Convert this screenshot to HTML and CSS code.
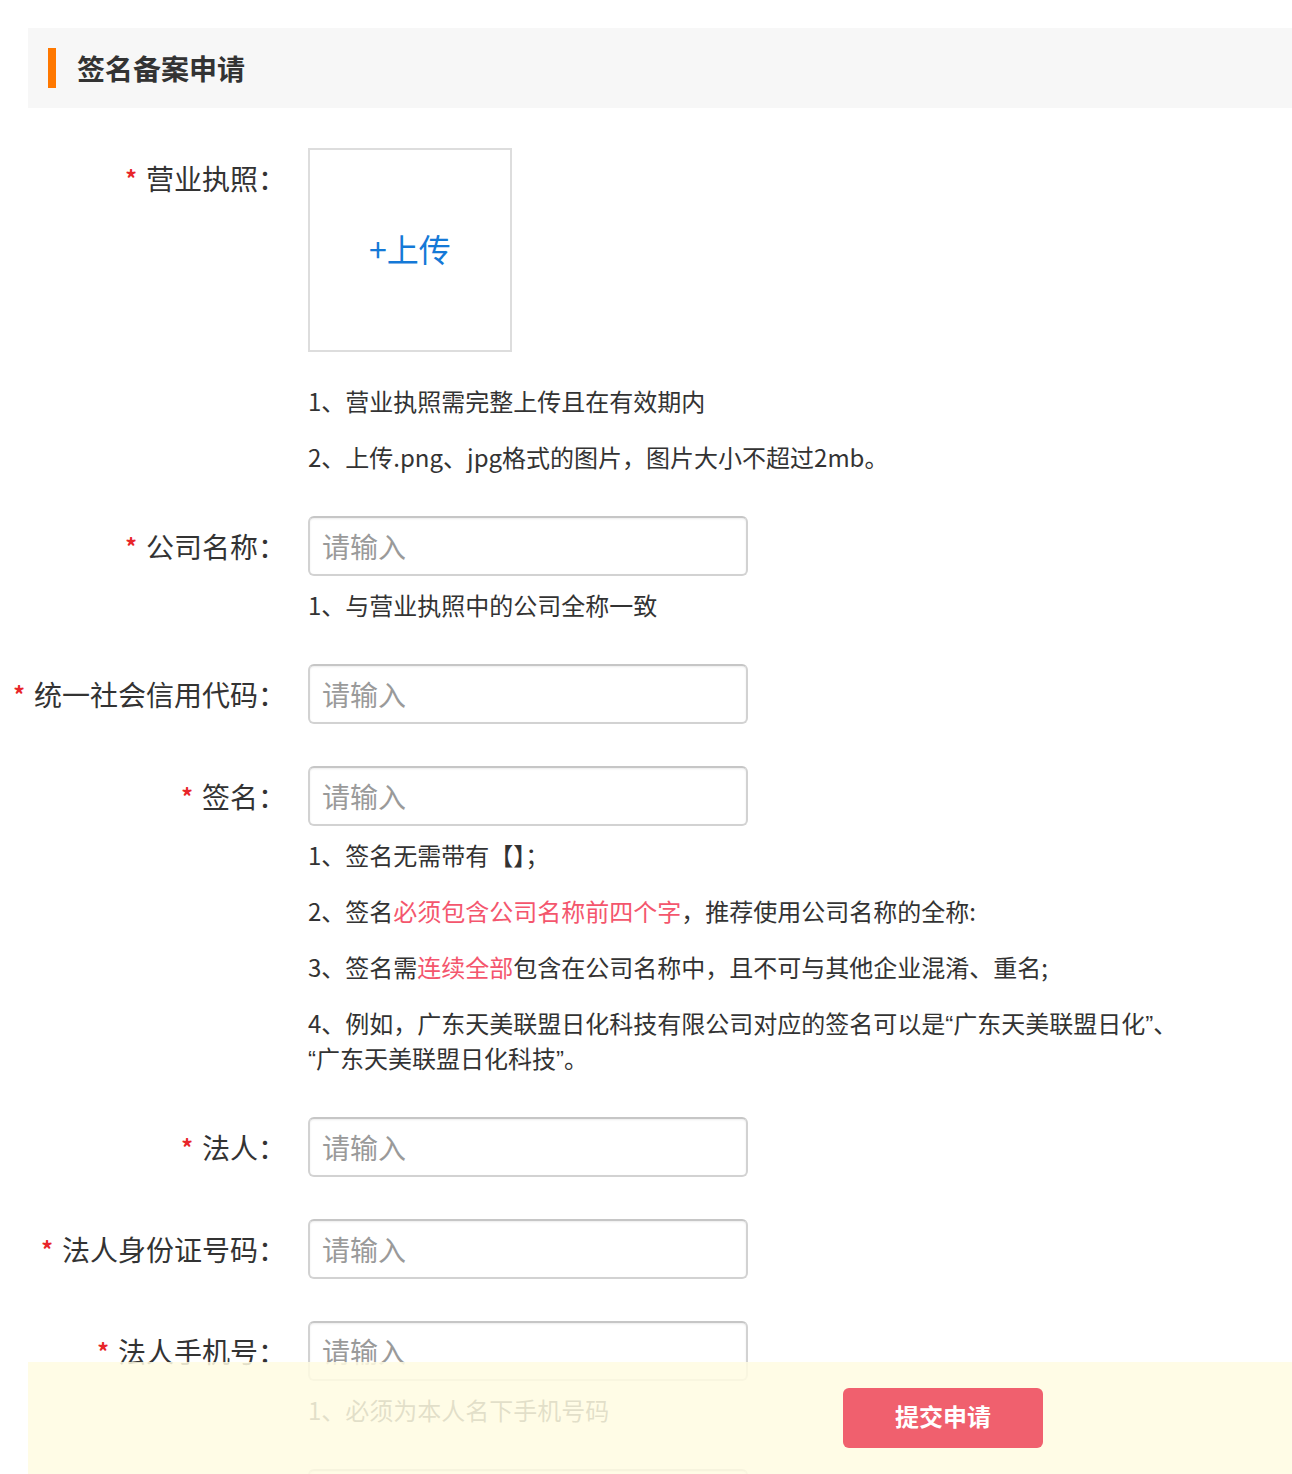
FILE: index.html
```html
<!DOCTYPE html>
<html lang="zh-CN">
<head>
  <meta charset="UTF-8">
  <meta name="viewport" content="width=device-width, initial-scale=1.0">
  <title>签名备案申请</title>
  <link rel="stylesheet" href="styles.css">
</head>
<body>
  <div class="page">
    <div class="panel-title">
      <span class="panel-bar"></span>
      <h2>签名备案申请</h2>
    </div>

    <div class="form">
      <div class="form-row">
        <label class="form-label"><span class="required">*</span><span>营业执照：</span></label>
        <div class="form-field">
          <div class="upload-box">+上传</div>
          <div class="help help-upload">
            <p>1、营业执照需完整上传且在有效期内</p>
            <p>2、上传.png、jpg格式的图片，图片大小不超过2mb。</p>
          </div>
        </div>
      </div>

      <div class="form-row">
        <label class="form-label"><span class="required">*</span><span>公司名称：</span></label>
        <div class="form-field">
          <input type="text" class="text-input" placeholder="请输入">
          <div class="help">
            <p>1、与营业执照中的公司全称一致</p>
          </div>
        </div>
      </div>

      <div class="form-row">
        <label class="form-label"><span class="required">*</span><span>统一社会信用代码：</span></label>
        <div class="form-field">
          <input type="text" class="text-input" placeholder="请输入">
        </div>
      </div>

      <div class="form-row">
        <label class="form-label"><span class="required">*</span><span>签名：</span></label>
        <div class="form-field">
          <input type="text" class="text-input" placeholder="请输入">
          <div class="help help-wide">
            <p>1、签名无需带有【】；</p>
            <p>2、签名<span class="hl">必须包含公司名称前四个字</span>，推荐使用公司名称的全称:</p>
            <p>3、签名需<span class="hl">连续全部</span>包含在公司名称中，且不可与其他企业混淆、重名;</p>
            <p>4、例如，广东天美联盟日化科技有限公司对应的签名可以是<span class="q">“</span>广东天美联盟日化<span class="q">”</span>、<span class="q">“</span>广东天美联盟日化科技<span class="q">”</span>。</p>
          </div>
        </div>
      </div>

      <div class="form-row">
        <label class="form-label"><span class="required">*</span><span>法人：</span></label>
        <div class="form-field">
          <input type="text" class="text-input" placeholder="请输入">
        </div>
      </div>

      <div class="form-row">
        <label class="form-label"><span class="required">*</span><span>法人身份证号码：</span></label>
        <div class="form-field">
          <input type="text" class="text-input" placeholder="请输入">
        </div>
      </div>

      <div class="form-row">
        <label class="form-label"><span class="required">*</span><span>法人手机号：</span></label>
        <div class="form-field">
          <input type="text" class="text-input" placeholder="请输入">
          <div class="help">
            <p>1、必须为本人名下手机号码</p>
          </div>
        </div>
      </div>

      <div class="form-row">
        <label class="form-label"><span class="required">*</span><span>验证码：</span></label>
        <div class="form-field">
          <input type="text" class="text-input" placeholder="请输入">
        </div>
      </div>
    </div>
  </div>

  <div class="submit-bar">
    <button class="submit-btn">提交申请</button>
  </div>
</body>
</html>
```

FILE: styles.css
```css
body {
  margin: 0;
  padding: 0;
  background-color: #ffffff;
  color: #333333;
  font-family: "PingFang SC", "Noto Sans CJK SC", "Noto Sans", sans-serif;
}

.page {
  margin-left: 28px;
  padding-top: 28px;
  padding-bottom: 140px;
}

.panel-title {
  display: flex;
  align-items: center;
  height: 80px;
  background-color: #f7f7f7;
  padding-left: 20px;
}

.panel-bar {
  width: 8px;
  height: 40px;
  background-color: #ff7800;
  margin-right: 21px;
}

.panel-title h2 {
  margin: 0;
  font-size: 28px;
  font-weight: bold;
  color: #333333;
  line-height: 40px;
}

.form {
  padding-top: 40px;
}

.form-row {
  display: flex;
  align-items: flex-start;
  margin-bottom: 42px;
}

/* flex-end so long labels overflow to the left */
.form-label {
  display: flex;
  justify-content: flex-end;
  align-items: center;
  width: 258px;
  height: 60px;
  flex-shrink: 0;
  font-size: 28px;
  line-height: 60px;
  color: #333333;
  margin-right: 22px;
  white-space: nowrap;
}

.required {
  color: #e8262a;
  font-size: 23px;
  font-weight: bold;
  line-height: 1;
  margin-right: 9px;
  position: relative;
  top: 0;
}

.form-field {
  flex: 1;
}

.upload-box {
  width: 200px;
  height: 196px;
  padding-bottom: 4px;
  border: 2px solid #dddddd;
  display: flex;
  align-items: center;
  justify-content: center;
  color: #1479d7;
  font-size: 32px;
  line-height: 40px;
  cursor: pointer;
}

.text-input {
  display: block;
  box-sizing: border-box;
  width: 440px;
  height: 60px;
  border: 2px solid #d2d2d2;
  border-top-color: #c6c6c6;
  border-radius: 6px;
  padding: 0 12px;
  font-family: inherit;
  font-size: 28px;
  color: #333333;
  outline: none;
  box-shadow: inset 0 1px 2px rgba(0, 0, 0, 0.08);
}

.text-input::placeholder {
  color: #9a9a9a;
}

.help {
  margin-top: 11px;
  font-size: 24px;
  line-height: 35px;
  color: #333333;
}

.help p {
  margin: 0 0 21px 0;
}

.help p:last-child {
  margin-bottom: 0;
}

.help-upload {
  margin-top: 31px;
}

.help-wide {
  max-width: 880px;
}

.q {
  font-family: "Liberation Sans", sans-serif;
  line-height: 1;
}

.hl {
  color: #f4566d;
}

.submit-bar {
  position: fixed;
  left: 28px;
  right: 0;
  bottom: 0;
  height: 112px;
  background-color: rgba(255, 252, 226, 0.86);
  display: flex;
  align-items: center;
  padding-left: 815px;
}

.submit-btn {
  width: 200px;
  height: 60px;
  padding: 0 0 4px 0;
  border: none;
  border-radius: 6px;
  background-color: #f0606e;
  color: #ffffff;
  font-family: inherit;
  font-size: 24px;
  font-weight: bold;
  line-height: 30px;
  cursor: pointer;
}
```
